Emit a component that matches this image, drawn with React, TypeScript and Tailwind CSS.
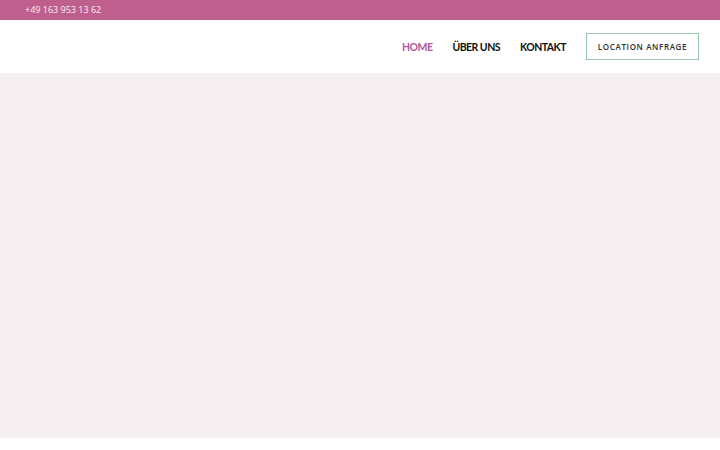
export default function App() {
  return (
    <div className="min-h-[450px] bg-white font-['Open_Sans',sans-serif]">
      <div className="flex h-5 items-center bg-[#be5f8e] px-[25px]">
        <span className="text-[9px] text-white/90">+49 163 953 13 62</span>
      </div>
      <header className="flex h-[53px] items-center justify-end pr-[21px]">
        <nav className="flex items-center gap-[20px] pt-[2px] font-['Lato',sans-serif] text-[10.5px] font-bold tracking-[-0.05em]">
          <a className="text-[#b5579b]">HOME</a>
          <a className="text-[#111]">ÜBER UNS</a>
          <a className="text-[#111]">KONTAKT</a>
        </nav>
        <a className="ml-5 flex h-[27px] w-[113px] items-center justify-center border border-[#98c6a8] text-[8px] font-semibold tracking-[0.08em] text-[#2d2d2d]">
          LOCATION ANFRAGE
        </a>
      </header>
      <section className="h-[365px] bg-[#f5eff1]" />
    </div>
  )
}
